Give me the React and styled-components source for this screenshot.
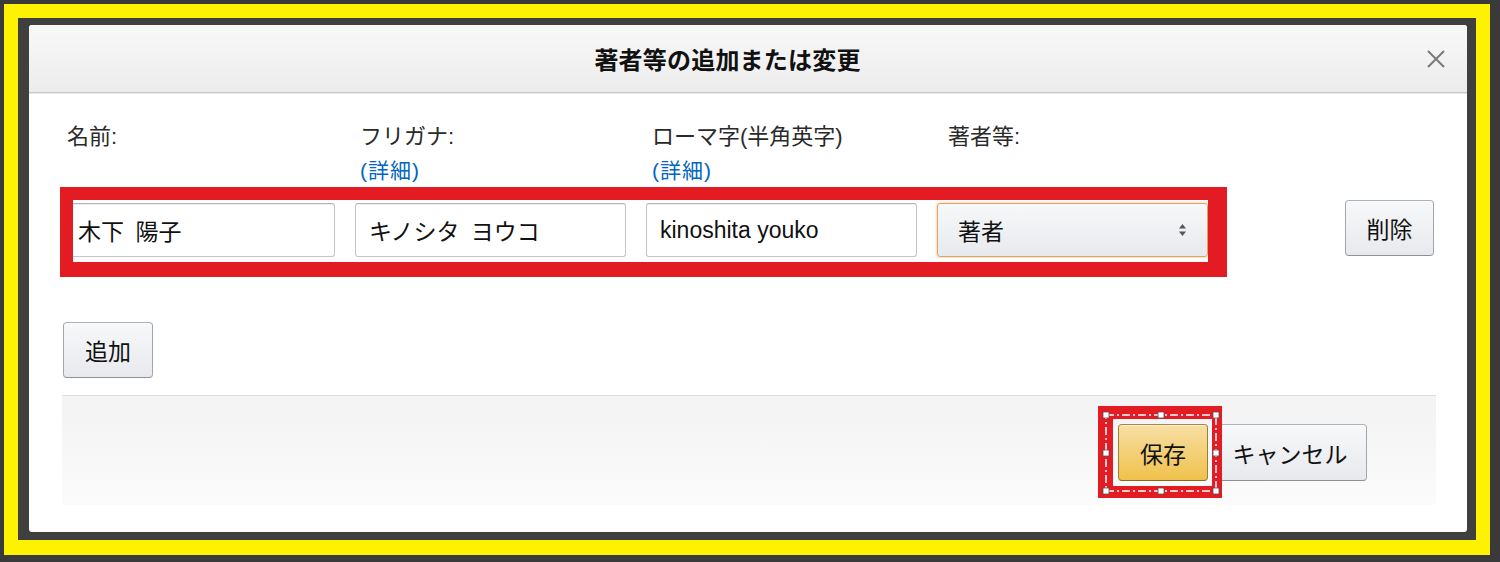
import React from "react";
import styled, { createGlobalStyle } from "styled-components";

const Global = createGlobalStyle`
  html, body { margin: 0; padding: 0; background: #3a3a3a; }
  body { font-family: "Liberation Sans", "Noto Sans CJK JP", sans-serif; }
  * { box-sizing: border-box; }
`;

const Page = styled.div`
  width: 1500px;
  height: 562px;
  padding: 4px 10px 7px 4px;
  background: #3a3a3a;
`;

const Frame = styled.div`
  height: 100%;
  border: 14px solid #fff200;
  border-bottom-width: 15px;
  background: #3f3f3f;
  padding: 7px 9px 8px 11px;
`;

const Modal = styled.div`
  height: 100%;
  background: #fff;
  border-radius: 3px;
  display: flex;
  flex-direction: column;
  overflow: hidden;
`;

const Header = styled.div`
  height: 68px;
  flex: none;
  display: flex;
  align-items: center;
  background: linear-gradient(#f8f8f8, #ececec);
  border-bottom: 1px solid #c8c8c8;
  box-shadow: 0 1px 0 #e9e9e9;
`;

const Title = styled.h1`
  flex: 1;
  margin: 0;
  text-align: center;
  font-size: 24px;
  font-weight: 700;
  color: #111;
  letter-spacing: 0.2px;
`;

const CloseButton = styled.button`
  width: 41px;
  height: 40px;
  padding: 0;
  border: 0;
  background: transparent;
  display: flex;
  align-items: center;
  justify-content: flex-start;
  color: #7a7a7a;
  cursor: pointer;
`;

const Body = styled.div`
  flex: 1;
  padding: 27px 31px 27px 33px;
  display: flex;
  flex-direction: column;
`;

const FieldGrid = styled.div`
  position: relative;
  margin: 0 2px;
  display: grid;
  grid-template-columns: repeat(4, 271px) 1fr;
  column-gap: 20px;
  row-gap: 15px;
`;

const Label = styled.div`
  font-size: 22px;
  line-height: 34px;
  padding-left: ${(p) => p.$indent || 4}px;
  color: #2a2a2a;
  height: 68px;
`;

const DetailLink = styled.a`
  display: block;
  color: #0066c0;
  text-decoration: none;
  font-size: 21px;
  letter-spacing: 1px;
`;

const TextInput = styled.input`
  height: 54px;
  width: 100%;
  border: 1px solid #c4c4c4;
  border-top-color: #b4b4b4;
  border-radius: 3px;
  padding: 0 13px;
  font-family: "Liberation Sans", "Noto Sans CJK JP", sans-serif;
  font-size: 23px;
  word-spacing: ${(p) => p.$space || 0}px;
  color: #111;
  background: #fff;
  box-shadow: 0 1px 0 rgba(255, 255, 255, 0.5), inset 0 1px 0 rgba(0, 0, 0, 0.07);
  outline: none;
`;

const SelectBox = styled.div`
  position: relative;
  height: 54px;
  border: 1px solid #e2a45f;
  border-radius: 3px;
  padding: 0 20px;
  display: flex;
  align-items: center;
  justify-content: space-between;
  background: linear-gradient(#f7f8fa, #e7e9ec);
  box-shadow: 0 0 2px 1px rgba(228, 121, 17, 0.25);
  font-size: 23px;
  color: #111;
`;

const Button = styled.button`
  width: ${(p) => p.$w}px;
  height: ${(p) => p.$h || 56}px;
  border-radius: 4px;
  border: 1px solid;
  border-color: ${(p) =>
    p.$primary ? "#a88734 #9c7e31 #846a29" : "#adb1b8 #a2a6ac #8d9096"};
  background: ${(p) =>
    p.$primary
      ? "linear-gradient(#f7dfa5, #f0c14b)"
      : "linear-gradient(#f7f8fa, #e7e9ec)"};
  box-shadow: inset 0 1px 0 rgba(255, 255, 255, 0.6);
  font-family: "Liberation Sans", "Noto Sans CJK JP", sans-serif;
  font-size: 23px;
  color: #111;
  padding: 0;
  cursor: pointer;
`;

const DeleteButton = styled(Button)`
  justify-self: end;
  align-self: start;
  margin-top: -3px;
`;

const AddButton = styled(Button)`
  align-self: flex-start;
  margin: 65px 0 0 1px;
`;

const Footer = styled.div`
  margin-top: 17px;
  height: 110px;
  flex: none;
  display: flex;
  justify-content: flex-end;
  align-items: flex-start;
  gap: 5px;
  padding: 28px 69px 0 0;
  background: linear-gradient(#f3f3f3, #fbfbfb);
  border-top: 1px solid #e0e0e0;
`;

const SaveWrap = styled.div`
  position: relative;
`;

const HighlightRow = styled.div`
  position: absolute;
  left: -4px;
  top: 67px;
  width: 1167px;
  height: 90px;
  border: 13px solid #e31b23;
  border-right-width: 19px;
  border-bottom-width: 15px;
  pointer-events: none;
`;

const SelectionMark = styled.svg`
  position: absolute;
  left: -20px;
  top: -18px;
  pointer-events: none;
`;

function SortArrows() {
  return (
    <svg width="9" height="14" viewBox="0 0 9 14">
      <path d="M4.5 1 L8 5.5 H1 Z" fill="#555" />
      <path d="M4.5 13 L8 8.5 H1 Z" fill="#555" />
    </svg>
  );
}

function Handle({ x, y }) {
  return <rect x={x - 3} y={y - 3} width="6" height="6" fill="#fff" stroke="#555" strokeWidth="0.8" />;
}

function SaveSelection() {
  const pts = [
    [8, 9], [63, 9], [118, 9],
    [8, 47], [118, 47],
    [8, 85], [63, 85], [118, 85],
  ];
  return (
    <SelectionMark width="124" height="92" viewBox="0 0 124 92">
      <path
        fillRule="evenodd"
        fill="#e31b23"
        d="M0 0 H124 V92 H0 Z M15 13 V80 H114 V13 Z"
      />
      <rect
        x="8"
        y="9"
        width="110"
        height="76"
        fill="none"
        stroke="#fff"
        strokeWidth="1.5"
        strokeDasharray="8 3 2 3"
      />
      {pts.map(([x, y], i) => (
        <Handle key={i} x={x} y={y} />
      ))}
    </SelectionMark>
  );
}

export default function App() {
  return (
    <>
      <Global />
      <Page>
        <Frame>
          <Modal>
            <Header>
              <Title>著者等の追加または変更</Title>
              <CloseButton aria-label="close">
                <svg width="20" height="20" viewBox="0 0 20 20">
                  <path d="M2 2 L18 18 M18 2 L2 18" stroke="#7a7a7a" strokeWidth="2" />
                </svg>
              </CloseButton>
            </Header>
            <Body>
              <FieldGrid>
                <Label $indent={3}>名前:</Label>
                <Label $indent={5}>
                  フリガナ:
                  <DetailLink href="#">(詳細)</DetailLink>
                </Label>
                <Label $indent={6}>
                  ローマ字(半角英字)
                  <DetailLink href="#">(詳細)</DetailLink>
                </Label>
                <Label $indent={11}>著者等:</Label>
                <div />

                <TextInput $space={5} defaultValue="木下 陽子" />
                <TextInput $space={5} defaultValue="キノシタ ヨウコ" />
                <TextInput defaultValue="kinoshita youko" />
                <SelectBox>
                  <span>著者</span>
                  <SortArrows />
                </SelectBox>
                <DeleteButton $w={89}>削除</DeleteButton>

                <HighlightRow />
              </FieldGrid>

              <AddButton $w={90}>追加</AddButton>

              <Footer>
                <SaveWrap>
                  <Button $primary $w={90} $h={57}>保存</Button>
                  <SaveSelection />
                </SaveWrap>
                <Button $w={154} $h={57}>キャンセル</Button>
              </Footer>
            </Body>
          </Modal>
        </Frame>
      </Page>
    </>
  );
}
